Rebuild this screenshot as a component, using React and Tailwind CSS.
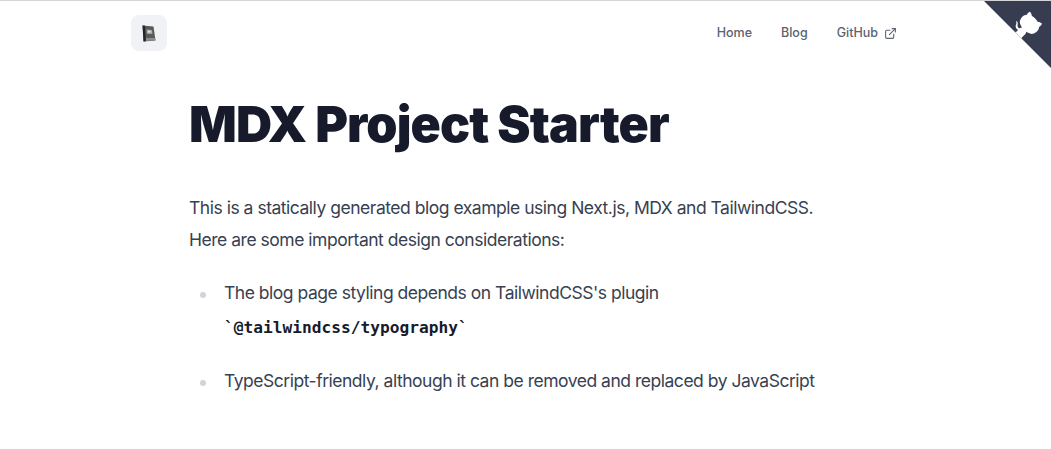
import { ExternalLink } from 'lucide-react';

function GithubCorner() {
  return (
    <svg width="67" height="67" viewBox="0 0 250 250" className="absolute top-0 right-0 fill-[#373c51] text-white">
      <path d="M0,0 L250,250 L250,0 Z" />
      <path d="M128.3,109.0 C113.8,99.7 119.0,89.6 119.0,89.6 C122.0,82.7 120.5,78.6 120.5,78.6 C119.2,72.0 123.4,76.3 123.4,76.3 C127.3,80.9 125.5,87.3 125.5,87.3 C122.9,97.6 130.6,101.9 134.4,103.2" fill="currentColor" />
      <path d="M115.0,115.0 C114.9,115.1 118.7,116.5 119.8,115.4 L133.7,101.6 C136.9,99.2 139.9,98.4 142.2,98.6 C133.8,88.0 127.5,74.4 143.8,58.0 C148.5,53.4 154.0,51.2 159.7,51.0 C160.3,49.4 163.2,43.6 171.4,40.1 C171.4,40.1 176.1,42.5 178.8,56.2 C183.1,58.6 187.2,61.8 190.9,65.4 C194.5,69.0 197.7,73.2 200.1,77.6 C213.8,80.2 216.3,84.9 216.3,84.9 C212.7,93.1 206.9,96.0 205.4,96.6 C205.1,102.4 203.0,107.8 198.3,112.5 C181.9,128.9 168.3,122.5 157.7,114.1 C157.9,116.9 156.7,120.9 152.7,124.9 L141.0,136.5 C139.8,137.7 141.6,141.9 141.8,141.8 Z" fill="currentColor" />
    </svg>
  );
}

function Logo() {
  return (
    <div className="flex h-9 w-9 items-center justify-center rounded-lg bg-[#f1f2f6]">
      <svg width="14" height="17" viewBox="0 0 14 17">
        <path d="M0.5 0.5 L11.5 1.5 L13.5 15.5 L1.5 16.5 Z" fill="#5a5a5a" />
        <path d="M0.5 0.5 L3 0.8 L3.8 16.3 L1.5 16.5 Z" fill="#242424" />
        <path d="M4.5 4.5 L10 4.9 L10.4 9 L4.8 8.8 Z" fill="#a8a8a8" />
        <path d="M6 5.7 L8.5 5.9 L8.6 7.6 L6.1 7.4 Z" fill="#ececec" />
        <path d="M4 13 L13 13 L13.4 15.3 L4 16 Z" fill="#8d8d8d" />
      </svg>
    </div>
  );
}

export default function App() {
  return (
    <div className="relative h-[449px] overflow-hidden border-t border-[#d4d4d8] bg-white font-['Inter',sans-serif] text-[#374151] [font-optical-sizing:none]">
      <GithubCorner />
      <header className="mx-auto flex w-[789px] items-start justify-between pt-[14px]">
        <Logo />
        <nav className="flex items-center gap-[29px] pt-[8px] pr-[23px] text-[12.5px] leading-5 font-medium text-[#5b6270]">
          <a>Home</a>
          <a>Blog</a>
          <a className="flex items-center gap-[6px]">
            GitHub
            <ExternalLink size={13} />
          </a>
        </nav>
      </header>
      <main className="mx-auto w-[673px] pt-[43px]">
        <h1 className="text-[50px] leading-[60px] font-black tracking-[-0.9px] text-[#161a2b]">MDX Project Starter</h1>
        <div className="text-[17.5px] tracking-[-0.48px]">
          <p className="mt-[38px] leading-8">
            This is a statically generated blog example using Next.js, MDX and TailwindCSS.
            <br />
            Here are some important design considerations:
          </p>
          <ul className="mt-[20px]">
            <li className="flex gap-[18px] pl-[11px]">
              <span className="mt-[16px] h-1.5 w-1.5 shrink-0 rounded-full bg-[#d1d5db]" />
              <div className="leading-[34px]">
                The blog page styling depends on TailwindCSS's plugin
                <br />
                <code className="font-['DejaVu_Sans_Mono',monospace] text-[16.2px] font-bold tracking-normal text-[#161a2b]">`@tailwindcss/typography`</code>
              </div>
            </li>
            <li className="mt-[19px] flex gap-[18px] pl-[11px]">
              <span className="mt-[16px] h-1.5 w-1.5 shrink-0 rounded-full bg-[#d1d5db]" />
              <div className="leading-[34px]">TypeScript-friendly, although it can be removed and replaced by JavaScript</div>
            </li>
          </ul>
        </div>
      </main>
    </div>
  );
}
